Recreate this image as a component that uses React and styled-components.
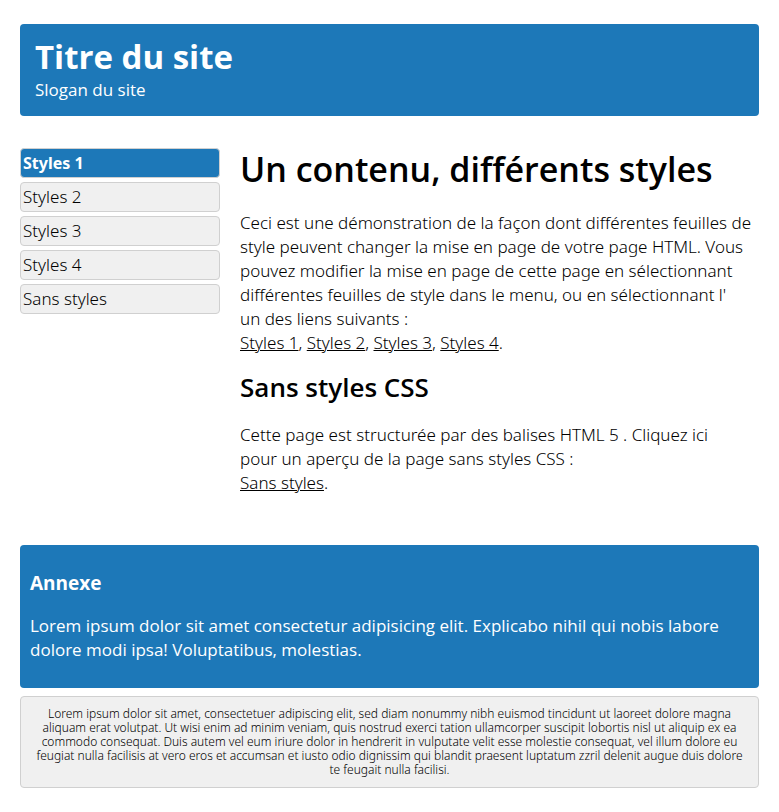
import React from "react";
import styled, { createGlobalStyle } from "styled-components";

const BLUE = "#1d78b8";

const GlobalStyle = createGlobalStyle`
  *, *::before, *::after { box-sizing: border-box; }
  body {
    margin: 0;
    background: #fff;
    color: #000;
    font: 300 17px/24px "Noto Sans", "Open Sans", sans-serif;
  }
  h1, h2, h3, p, ul { margin: 0; padding: 0; }
  h1, h2, h3 { font-family: "Open Sans", "Noto Sans", sans-serif; }
`;

const Page = styled.div`
  padding: 24px 20px;
`;

const Header = styled.header`
  padding: 12px 15px 14px;
  margin-bottom: 32px;
  border-radius: 4px;
  background: ${BLUE};
  color: #fff;
`;

const SiteTitle = styled.h1`
  font-size: 33px;
  line-height: 42px;
  font-weight: 700;
`;

const Slogan = styled.p`
  font-family: "Open Sans", "Noto Sans", sans-serif;
  line-height: 24px;
  font-weight: 400;
`;

const Columns = styled.div`
  display: flex;
  align-items: flex-start;
  gap: 20px;
  margin-bottom: 50px;
`;

const Menu = styled.ul`
  display: flex;
  flex-direction: column;
  gap: 4px;
  list-style: none;
`;

const Nav = styled.nav`
  flex: 0 0 200px;
`;

const MenuLink = styled.a`
  display: block;
  padding: 2px;
  border: 1px solid #d0d0d0;
  border-radius: 4px;
  background: ${(p) => (p.$active ? BLUE : "#f0f0f0")};
  color: ${(p) => (p.$active ? "#fff" : "#000")};
  font-weight: ${(p) => (p.$active ? 700 : 300)};
  font-size: ${(p) => (p.$active ? "16px" : "17px")};
  text-decoration: none;
`;

const Content = styled.main`
  flex: 1;
  min-width: 0;
`;

const ContentTitle = styled.h1`
  margin-bottom: 20px;
  font-size: 34px;
  line-height: 43px;
  font-weight: 600;
`;

const SectionTitle = styled.h2`
  margin: 16px 0 20px;
  font-size: 26px;
  line-height: 32px;
  font-weight: 600;
`;

const TextLink = styled.a`
  color: inherit;
  text-decoration: underline;
  text-decoration-thickness: 1px;
`;

const Annex = styled.aside`
  padding: 26px 10px;
  margin-bottom: 8px;
  border-radius: 4px;
  background: ${BLUE};
  color: #fff;
  font-family: "Open Sans", "Noto Sans", sans-serif;
  font-weight: 400;
`;

const AnnexTitle = styled.h3`
  margin-bottom: 19px;
  font-size: 19px;
  line-height: 24px;
  font-weight: 700;
`;

const Footer = styled.footer`
  padding: 10px;
  border: 1px solid #d0d0d0;
  border-radius: 4px;
  background: #f0f0f0;
  font-size: 12px;
  line-height: 14px;
  text-align: center;
`;

const styleNames = ["Styles 1", "Styles 2", "Styles 3", "Styles 4"];

export default function App() {
  return (
    <>
      <GlobalStyle />
      <Page>
        <Header>
          <SiteTitle>Titre du site</SiteTitle>
          <Slogan>Slogan du site</Slogan>
        </Header>
        <Columns>
          <Nav aria-label="Styles">
            <Menu>
              {[...styleNames, "Sans styles"].map((name, i) => (
                <li key={name}>
                  <MenuLink href="#" $active={i === 0}>{name}</MenuLink>
                </li>
              ))}
            </Menu>
          </Nav>
          <Content>
            <ContentTitle>Un contenu, différents styles</ContentTitle>
            <p>
              Ceci est une démonstration de la façon dont différentes feuilles de style peuvent
              changer la mise en page de votre page HTML. Vous pouvez modifier la mise en page de
              cette page en sélectionnant différentes feuilles de style dans le menu, ou en
              sélectionnant l'<br />un des liens suivants :<br />
              {styleNames.map((name, i) => (
                <React.Fragment key={name}>
                  {i > 0 && ", "}
                  <TextLink href="#">{name}</TextLink>
                </React.Fragment>
              ))}
              .
            </p>
            <SectionTitle>Sans styles CSS</SectionTitle>
            <p>
              Cette page est structurée par des balises HTML 5 . Cliquez ici<br />
              pour un aperçu de la page sans styles CSS :<br />
              <TextLink href="#">Sans styles</TextLink>.
            </p>
          </Content>
        </Columns>
        <Annex>
          <AnnexTitle>Annexe</AnnexTitle>
          <p>
            Lorem ipsum dolor sit amet consectetur adipisicing elit. Explicabo nihil qui nobis
            labore dolore modi ipsa! Voluptatibus, molestias.
          </p>
        </Annex>
        <Footer>
          Lorem ipsum dolor sit amet, consectetuer adipiscing elit, sed diam nonummy nibh euismod
          tincidunt ut laoreet dolore magna aliquam erat volutpat. Ut wisi enim ad minim veniam,
          quis nostrud exerci tation ullamcorper suscipit lobortis nisl ut aliquip ex ea commodo
          consequat. Duis autem vel eum iriure dolor in hendrerit in vulputate velit esse molestie
          consequat, vel illum dolore eu feugiat nulla facilisis at vero eros et accumsan et iusto
          odio dignissim qui blandit praesent luptatum zzril delenit augue duis dolore te feugait
          nulla facilisi.
        </Footer>
      </Page>
    </>
  );
}
